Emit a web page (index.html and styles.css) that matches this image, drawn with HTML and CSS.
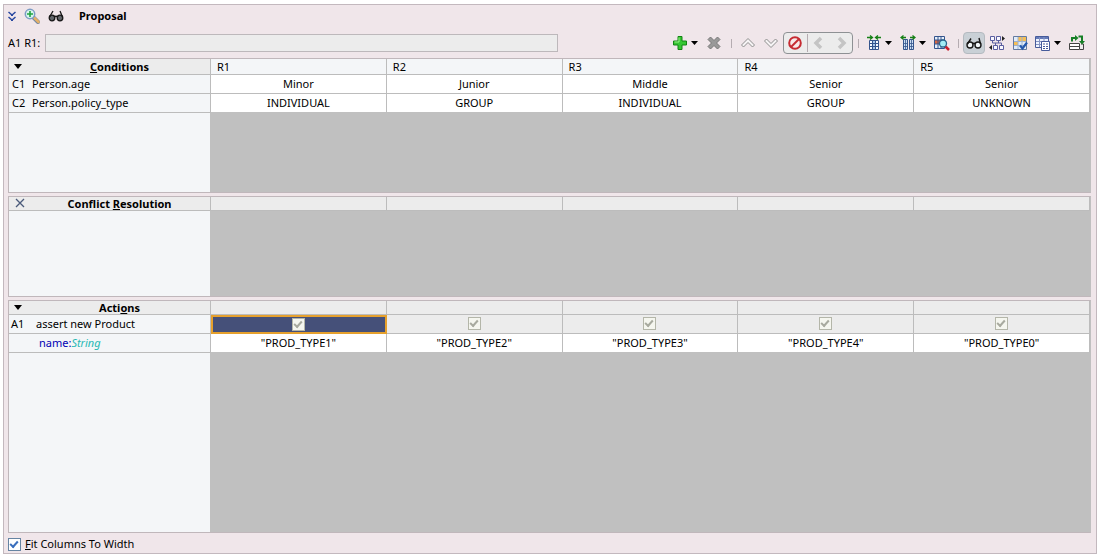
FILE: index.html
```html
<!DOCTYPE html>
<html lang="en">
<head>
<meta charset="utf-8">
<title>Proposal</title>
<link rel="stylesheet" href="styles.css">
</head>
<body>
<main class="panel">
  <header class="title-bar">
    <button class="plain" aria-label="Collapse"><svg width="8" height="11" viewBox="0 0 8 11" fill="none" stroke="#2948a0" stroke-width="1.500"><path d="M.5 1L4 4l3.500-3M.5 6L4 9l3.500-3"/><path d="M3 4h2M3 9h2" stroke-width="2"/></svg></button>
    <button class="plain" aria-label="Zoom"><svg width="16" height="16" viewBox="0 0 16 16"><path d="M9.500 9.500l4.500 4.500" stroke="#7587a0" stroke-width="4" stroke-linecap="round"/><path d="M10.500 10l4 4" stroke="#e6b168" stroke-width="2.500" stroke-linecap="round"/><circle cx="6" cy="6" r="4.700" fill="#d9f5ed" stroke="#7d9cc5" stroke-width="1.500"/><path d="M6 3v6M3 6h6" stroke="#20a343" stroke-width="1.600"/></svg></button>
    <button class="plain" aria-label="View"><svg width="16" height="16" viewBox="0 0 16 16" fill="#62666b" stroke="#171717" stroke-width="1.300"><circle cx="4" cy="10" r="2.800"/><circle cx="12" cy="10" r="2.800"/><path d="M6.500 9q1.500-1.500 3 0M1.500 9L5 3M14.500 9L12 3" fill="none"/></svg></button>
    <h1 class="title">Proposal</h1>
  </header>

  <div class="tools">
    <label class="cell-label" for="cell">A1 R1:</label>
    <input class="cell-input" id="cell" type="text" readonly>
    <div class="toolbar">
      <button class="tool menu" aria-label="Add"><svg class="icon" viewBox="0 0 16 16"><path d="M6 1.500h4V6h4.500v4H10v4.500H6V10H1.500V6H6z" fill="#35c632" stroke="#138413"/><path d="M7 2.500v4.500H2.500" fill="none" stroke="#9af087"/></svg><svg class="caret" viewBox="0 0 7 4"><path d="M0 0h7L3.500 4z"/></svg></button>
      <button class="tool" aria-label="Delete"><svg class="icon" viewBox="0 0 16 16"><path d="M2 4.500L4.500 2 8 5.500 11.500 2 14 4.500 10.500 8l3.500 3.500-2.500 2.500L8 10.500 4.500 14 2 11.500 5.500 8z" fill="#999" stroke="#777"/></svg></button>
      <span class="sep wide"></span>
      <button class="tool" aria-label="Move up"><svg class="icon" viewBox="0 0 16 16"><path d="M1.500 10L8 3.500l6.500 6.500-2 2L8 7.500 3.500 12z" fill="#f6f4f5" stroke="#8e8e8e"/></svg></button>
      <button class="tool" aria-label="Move down"><svg class="icon" viewBox="0 0 16 16"><path d="M1.500 6L8 12.500 14.500 6l-2-2L8 8.500 3.500 4z" fill="#f6f4f5" stroke="#8e8e8e"/></svg></button>
      <div class="group">
        <button class="tool" aria-label="No conflict"><svg class="icon" viewBox="0 0 16 16" fill="none"><circle cx="8" cy="8" r="5.800" fill="#f8e9e9" stroke="#c62b32" stroke-width="2"/><path d="M4 12l8-8" stroke="#c62b32" stroke-width="2"/></svg></button>
        <span class="sep tall"></span>
        <button class="tool" aria-label="Previous"><svg class="icon" viewBox="0 0 16 16"><path d="M10 3L5 8l5 5" fill="none" stroke="#c4c4c4" stroke-width="3.500"/></svg></button>
        <button class="tool" aria-label="Next"><svg class="icon" viewBox="0 0 16 16"><path d="M6 3l5 5-5 5" fill="none" stroke="#c4c4c4" stroke-width="3.500"/></svg></button>
      </div>
      <span class="sep"></span>
      <button class="tool menu" aria-label="Compact"><svg class="icon" viewBox="0 0 16 16"><path d="M3.500 5.500h9v9h-9z" fill="#f8fbff"/><path d="M6 5h4v10H6z" fill="#a9c9ed"/><path d="M3.500 5.500h9v9h-9zM6.500 5v10M9.500 5v10M3 8.500h10M3 11.500h10" fill="none" stroke="#35558d"/><path d="M1 2.500h5M4 .5l2.500 2L4 4.500M15 2.500h-5M12 .5l-2.500 2 2.500 2" fill="none" stroke="#168016" stroke-width="1.300"/></svg><svg class="caret" viewBox="0 0 7 4"><path d="M0 0h7L3.500 4z"/></svg></button>
      <button class="tool menu" aria-label="Split"><svg class="icon" viewBox="0 0 16 16"><path d="M3.500 4.500h4v10h-4zM9.500 4.500h4v10h-4z" fill="#c9dcf3" stroke="#35558d"/><path d="M5.500 5v10M11.500 5v10M3 8.500h5M3 11.500h5M9 8.500h5M9 11.500h5" stroke="#35558d" stroke-width=".8"/><path d="M1 2.500h5M10 2.500h5M3.500.5L1 2.500l2.500 2M12.500.5l2.500 2-2.500 2" fill="none" stroke="#168016" stroke-width="1.300"/></svg><svg class="caret" viewBox="0 0 7 4"><path d="M0 0h7L3.500 4z"/></svg></button>
      <button class="tool" aria-label="Find"><svg class="icon" viewBox="0 0 16 16"><path d="M.5 1.500h10v12H.5z" fill="#e6effa" stroke="#35558d"/><path d="M1 5h9v4H1z" fill="#d96842"/><path d="M4 1v12M7 1v12M0 5h10M0 9h10" stroke="#35558d"/><path d="M11 11l4 4" stroke="#c9202c" stroke-width="2.500"/><circle cx="9" cy="8.500" r="3.500" fill="#a2edf5" stroke="#28658c" stroke-width="1.300"/></svg></button>
      <span class="sep"></span>
      <button class="tool pressed" aria-label="Show logic" aria-pressed="true"><svg class="icon" viewBox="0 0 16 16" fill="#f2f7fa" stroke="#171717" stroke-width="1.400"><circle cx="4" cy="10" r="3"/><circle cx="12" cy="10" r="3"/><path d="M6.500 9q1.500-1.500 3 0M1.500 9L5 3.500M14.500 9L13 3" fill="none"/></svg></button>
      <button class="tool" aria-label="Swap axes"><svg class="icon" viewBox="0 0 16 16" fill="#f8f8ff" stroke="#5a5fa0"><path d="M1.500 1.500h4v4h-4zM7.500 1.500h4v4h-4zM4.500 10.500h4v4h-4zM10.500 10.500h4v4h-4z"/><path d="M3.500 6v2h9v2M9.500 6v2M6.500 8v2" fill="none"/><path d="M13 1v5l3-2.500zM3 10v5l-3-2.500z" fill="#222" stroke="none"/></svg></button>
      <button class="tool" aria-label="Validate"><svg class="icon" viewBox="0 0 16 16"><path d="M1.500 1.500h13v13h-13z" fill="#e1ecfa" stroke="#657a9f"/><path d="M6 2h4v5H6zM2 6h4v5H2zM10 2h4v4h-4z" fill="#f6be55"/><path d="M6 2v12M10 2v12M2 6.500h12M2 10.500h12" stroke="#9cb2d2"/><path d="M8 10.500l2.500 3 4.500-6" fill="none" stroke="#2458ad" stroke-width="2.200"/></svg></button>
      <button class="tool menu" aria-label="Table options"><svg class="icon" viewBox="0 0 16 16"><path d="M.5 1.500h13v11H.5z" fill="#edf3ff" stroke="#465b9a"/><path d="M1 2h12v2H1z" fill="#657ab8"/><path d="M4.500 2v10M9 2v10M1 6.500h12M1 9.500h12" stroke="#8494c3"/><path d="M6.500 6.500h8v9h-8z" fill="#fff" stroke="#465b9a"/><path d="M8 9h2m1 0h2M8 11.500h2m1 0h2M8 13.500h2m1 0h2" stroke="#465b9a"/></svg><svg class="caret" viewBox="0 0 7 4"><path d="M0 0h7L3.500 4z"/></svg></button>
      <button class="tool" aria-label="Refresh"><svg class="icon" viewBox="0 0 16 16"><path d="M.5 8.500h10v6H.5zM.5 11.500h10" fill="#fff" stroke="#444"/><path d="M12 9h2.500v5.500H11" fill="#eee" stroke="#444"/><path d="M3 6.500V3h4" fill="none" stroke="#168026" stroke-width="2"/><path d="M6 0v6l3.500-3zM10 6h6l-3 3.500z" fill="#168026"/><path d="M9.500 1.500H13V7" fill="none" stroke="#168026" stroke-width="2"/></svg></button>
    </div>
  </div>

  <section class="block conditions">
    <table class="grid">
      <thead>
        <tr><th class="lead"><button class="mark" aria-label="Toggle conditions"><svg width="8" height="5" viewBox="0 0 8 5"><path d="M0 0h8L4 5z"/></svg></button><u>C</u>onditions</th><th>R1</th><th>R2</th><th>R3</th><th>R4</th><th>R5</th></tr>
      </thead>
      <tbody>
        <tr><th scope="row"><span class="tag">C1</span>Person.age</th><td>Minor</td><td>Junior</td><td>Middle</td><td>Senior</td><td>Senior</td></tr>
        <tr><th scope="row"><span class="tag">C2</span>Person.policy_type</th><td>INDIVIDUAL</td><td>GROUP</td><td>INDIVIDUAL</td><td>GROUP</td><td>UNKNOWN</td></tr>
      </tbody>
    </table>
  </section>

  <section class="block conflict">
    <table class="grid slim">
      <thead>
        <tr><th class="lead"><button class="mark cross" aria-label="Toggle conflict resolution"><svg width="10" height="10" viewBox="0 0 10 10"><path d="M1 1l8 8M9 1L1 9" stroke="#4a5a7a" stroke-width="1.300"/></svg></button>Conflict <u>R</u>esolution</th><th></th><th></th><th></th><th></th><th></th></tr>
      </thead>
    </table>
  </section>

  <section class="block actions">
    <table class="grid slim">
      <thead>
        <tr><th class="lead"><button class="mark" aria-label="Toggle actions"><svg width="8" height="5" viewBox="0 0 8 5"><path d="M0 0h8L4 5z"/></svg></button>Acti<u>o</u>ns</th><th></th><th></th><th></th><th></th><th></th></tr>
      </thead>
      <tbody>
        <tr class="flags"><th scope="row"><span class="tag action">A1</span>assert new Product</th><td class="selected"><input class="check" type="checkbox" aria-label="R1 product" checked disabled></td><td><input class="check" type="checkbox" aria-label="R2 product" checked disabled></td><td><input class="check" type="checkbox" aria-label="R3 product" checked disabled></td><td><input class="check" type="checkbox" aria-label="R4 product" checked disabled></td><td><input class="check" type="checkbox" aria-label="R5 product" checked disabled></td></tr>
        <tr class="values"><th scope="row"><span class="prop">name:</span><i class="type">String</i></th><td>"PROD_TYPE1"</td><td>"PROD_TYPE2"</td><td>"PROD_TYPE3"</td><td>"PROD_TYPE4"</td><td>"PROD_TYPE0"</td></tr>
      </tbody>
    </table>
  </section>

  <label class="fit"><input class="check" type="checkbox" checked><span><u>F</u>it Columns To Width</span></label>
</main>
</body>
</html>
```

FILE: styles.css
```css
* { box-sizing: border-box; }

body {
  margin: 0;
  padding: 4px 4px 1px 3px;
  min-height: 100vh;
  display: flex;
  background: #fff;
  color: #000;
  font: 11px/16px "Noto Sans", "Open Sans", sans-serif;
}

button {
  padding: 0;
  border: 0;
  background: none;
  font: inherit;
}

svg { display: block; }

.panel {
  flex: 1;
  min-width: 0;
  display: flex;
  flex-direction: column;
  padding: 0 5px 0 4px;
  border: 1px solid #c3b8be;
  background: #f0e6ea;
}

.title-bar {
  display: flex;
  align-items: center;
  gap: 8px;
  height: 22px;
}

.plain { min-width: 8px; }

.title {
  margin: 0 0 0 7px;
  font-size: 11px;
}

.tools {
  display: flex;
  align-items: center;
  height: 31px;
  padding-top: 1px;
}

.cell-label {
  width: 37px;
  white-space: nowrap;
}

.cell-input {
  flex: 0 0 47.4%;
  min-width: 0;
  height: 18px;
  border: 1px solid #bdb8bb;
  background: #ececec;
}

.toolbar {
  flex: 1;
  display: flex;
  align-items: center;
  justify-content: flex-end;
  gap: 1px;
  padding-right: 3px;
}

.tool {
  display: flex;
  align-items: center;
  justify-content: center;
  flex: none;
  width: 22px;
  height: 22px;
  border-radius: 4px;
}

.menu {
  justify-content: flex-start;
  width: 33px;
}

.icon {
  flex: none;
  width: 16px;
  height: 16px;
}

.menu .icon { margin: 0 3px; }

.caret {
  width: 7px;
  height: 4px;
}

.pressed {
  border: 1px solid #b4bac0;
  background: #c9d0d6;
}

.group {
  display: flex;
  align-items: center;
  width: 70px;
  height: 22px;
  border: 1px solid #8e9194;
  border-radius: 4px;
  background: #ececec;
}

.sep {
  width: 8px;
  height: 9px;
  background: linear-gradient(#b5acb1, #b5acb1) center / 1px 100% no-repeat;
}

.sep.wide { width: 10px; }

.sep.tall {
  width: 2px;
  height: 18px;
}

.block {
  min-height: min-content;
  margin-bottom: 3px;
  border: 1px solid #c0b7bb;
  border-right-color: #c0c0c0;
  background: linear-gradient(90deg, #f4f6f8 201px, #c0c0c0 201px);
}

.conditions { flex: 135 1 0; }
.conflict { flex: 100 1 0; }
.actions { flex: 234 1 0; }

.grid {
  width: 100%;
  table-layout: fixed;
  border-collapse: separate;
  border-spacing: 0;
}

.grid th,
.grid td {
  height: 19px;
  padding: 0;
  border-right: 1px solid #bcbcbc;
  border-bottom: 1px solid #bcbcbc;
  background: #fff;
  line-height: 16px;
  text-align: center;
}

.grid th {
  background: #f4f6f8;
  font-weight: normal;
  text-align: left;
}

.grid thead th {
  height: 16px;
  padding-left: 6px;
  line-height: 15px;
}

.grid.slim thead th {
  height: 14px;
  background: #ececec;
  line-height: 13px;
}

.grid thead .lead {
  position: relative;
  width: 202px;
  padding: 0 0 0 20px;
  background: #ececec;
  font-weight: bold;
  text-align: center;
}

.mark {
  position: absolute;
  top: 5px;
  left: 5px;
}

.slim .mark { top: 4px; }
.slim .cross { top: 1px; left: 6px; }

.grid tbody tr:last-child td { border-bottom-color: #c0c0c0; }

.tag {
  display: inline-block;
  width: 20px;
  margin-left: 3px;
}

.tag.action {
  width: 25px;
  margin-left: 2px;
}

.prop {
  margin-left: 30px;
  color: #0000b4;
}

.type { color: #28b9b4; }

.grid .flags td { background: #ececec; }

.grid .flags .selected {
  border: 2px solid #e5a02d;
  background: #455079;
}

.check {
  appearance: none;
  display: block;
  width: 13px;
  height: 13px;
  margin: 0 auto;
  border: 1px solid #6684a2;
  background: #fff;
}

.check:checked::before {
  content: "";
  display: block;
  width: 6px;
  height: 3px;
  margin: 2px 0 0 1px;
  border-left: 2px solid #3b6fbd;
  border-bottom: 2px solid #3b6fbd;
  transform: rotate(-48deg);
}

.check:disabled {
  border-color: #b4b6a9;
  background: #f5f6ef;
}

.check:disabled::before { border-color: #a8aa9f; }

.fit {
  display: flex;
  align-items: center;
  align-self: flex-start;
  gap: 4px;
  height: 17px;
}
```
